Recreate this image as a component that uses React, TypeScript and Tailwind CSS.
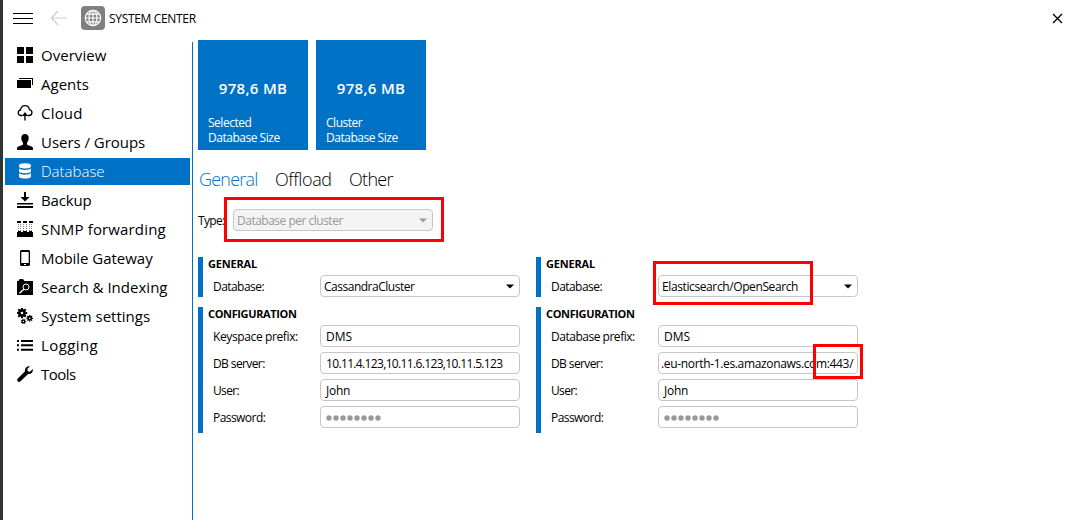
import type { ReactNode } from "react";

function Svg({ children, box = "0 0 16 16" }: { children: ReactNode; box?: string }) {
  return (
    <svg className="-mt-px h-4 w-4 shrink-0" viewBox={box} fill="currentColor">
      {children}
    </svg>
  );
}

const gear = (cx: number, cy: number, r: number, n: number) => (
  <g key={`${cx}-${cy}`} fill="none" stroke="currentColor">
    <circle cx={cx} cy={cy} r={r * 0.55} strokeWidth={r * 0.56} />
    {Array.from({ length: n }, (_, i) => {
      const a = (i * 2 * Math.PI) / n;
      return (
        <line
          key={i}
          x1={cx + Math.cos(a) * r * 0.7}
          y1={cy + Math.sin(a) * r * 0.7}
          x2={cx + Math.cos(a) * r * 1.12}
          y2={cy + Math.sin(a) * r * 1.12}
          strokeWidth={r * 0.42}
        />
      );
    })}
  </g>
);

const icons: Record<string, ReactNode> = {
  overview: <Svg><path d="M0 0h7v7H0zM9 0h7v7H9zM0 9h7v7H0zM9 9h7v7H9z" /></Svg>,
  agents: <Svg><path d="M0 4h14v8H0zM2 2h14v7h-1V3H2z" /></Svg>,
  cloud: (
    <Svg>
      <path d="M5.500 10.500H3.600A2.800 2.800 0 0 1 3.400 5C4 2.300 5.700 .7 8 .7s4 1.500 4.500 3.900a3 3 0 0 1 0 5.900H10.500" fill="none" stroke="currentColor" strokeWidth="1.300" />
      <path d="M8 7l3 4H8.700v4.500H7.300V11H5z" />
    </Svg>
  ),
  users: <Svg><path d="M8 0c2.600 0 3.800 1.700 3.700 4.200-.1 2-.8 3.400-1.700 4.500v1.700c.5 1 5 1.300 6 3.300V16H0v-2.300c1-2 5.500-2.300 6-3.300V8.700C5 7.600 4.400 6.200 4.300 4.200 4.200 1.700 5.400 0 8 0z" /></Svg>,
  database: (
    <Svg>
      <path d="M2 2.500C2-.4 14-.4 14 2.500v1C14 6.100 2 6.100 2 3.500zM2 5.300c1.500 2.100 10.500 2.100 12 0v3c0 2.600-12 2.600-12 0zM2 10.100c1.500 2.100 10.500 2.100 12 0v3.300c0 2.900-12 2.900-12 0z" />
    </Svg>
  ),
  backup: <Svg><path d="M7 0h2v5h3.500L8 9.500 3.500 5H7zM0 11h16v1.500H0zM0 14h16v2H0z" /></Svg>,
  snmp: (
    <Svg>
      <path d="M0 0h4v2H0zM6 0h4v2H6zM12 0h4v2h-4zM0 11h1v-1h3v1h2v-1h4v1h2v-1h3v1h1v5H0z" />
      <path d="M1.500 3v7M3.500 3v7M6.500 3v7M9.500 3v7M12.500 3v7M14.500 3v7" stroke="currentColor" strokeWidth=".6" strokeDasharray="1 1" opacity=".75" />
    </Svg>
  ),
  mobile: (
    <Svg>
      <path fillRule="evenodd" d="M4.500 0h7A1.500 1.500 0 0 1 13 1.500v13a1.500 1.500 0 0 1-1.500 1.500h-7A1.500 1.500 0 0 1 3 14.500v-13A1.500 1.500 0 0 1 4.500 0zM4.300 2v11h7.400V2zM7 14v1h2v-1z" />
    </Svg>
  ),
  search: (
    <Svg>
      <path d="M0 16V2h1.500l1-2h3.500l1.500 2H16v14z" />
      <circle cx="9" cy="8" r="3" fill="none" stroke="white" strokeWidth="1" />
      <path d="M6.800 10.200l-4.300 4" stroke="white" strokeWidth="1.400" />
    </Svg>
  ),
  settings: <Svg>{[gear(5, 5, 4.700, 8), gear(12.700, 10.300, 3, 8), gear(6.500, 13.500, 2.400, 7)]}</Svg>,
  logging: <Svg><path d="M0 3h2v2H0zM4 3h12v2H4zM0 7.300h2v2H0zM4 7.300h12v2H4zM0 11.700h2v2H0zM4 11.700h12v2H4z" /></Svg>,
  tools: (
    <Svg>
      <path d="M13 .3 10.300 3l.4 2.300 2.300.4 2.700-2.700c.8 3-1.400 5.400-4.600 5L3.300 15.500c-1.600 1.300-4-.9-2.700-2.700L8 5.300C7.500 2 10 -.5 13 .3z" />
    </Svg>
  ),
};

const nav = [
  { icon: "overview", label: "Overview", track: "tracking-[0.04px]" },
  { icon: "agents", label: "Agents", track: "tracking-[0.02px]" },
  { icon: "cloud", label: "Cloud", track: "tracking-[0.2px]" },
  { icon: "users", label: "Users / Groups", track: "tracking-[-0.03px]" },
  { icon: "database", label: "Database", track: "font-light tracking-[0px]" },
  { icon: "backup", label: "Backup", track: "tracking-[-0.15px]" },
  { icon: "snmp", label: "SNMP forwarding", track: "tracking-[0.15px]" },
  { icon: "mobile", label: "Mobile Gateway", track: "tracking-[-0.03px]" },
  { icon: "search", label: "Search & Indexing", track: "tracking-[0.02px]" },
  { icon: "settings", label: "System settings", track: "tracking-[0.01px]" },
  { icon: "logging", label: "Logging", track: "tracking-[0.4px]" },
  { icon: "tools", label: "Tools", track: "tracking-[-0.5px]" },
];

function Caret() {
  return (
    <svg className="h-[5px] w-2 shrink-0" viewBox="0 0 8 5" fill="currentColor">
      <path d="M0 .5h8L4 4.500z" />
    </svg>
  );
}

function Tile({ title }: { title: string }) {
  return (
    <div className="flex h-[110px] w-[110px] flex-col bg-[#0072c6] text-white">
      <div className="mt-[38px] text-center text-[15px] leading-5 font-semibold tracking-[0.3px]">978,6 MB</div>
      <div className="mt-[17px] pl-[10px] text-[12px] leading-[15px] tracking-[-0.48px]">
        {title}
        <br />
        Database Size
      </div>
    </div>
  );
}

function Field({ label, children, track = "tracking-[-0.55px]" }: { label: string; children: ReactNode; track?: string }) {
  return (
    <div className="flex h-[22px] items-center">
      <span className={`w-[107px] shrink-0 pt-[2px] text-[12px] ${track}`}>{label}</span>
      <div className="flex h-[22px] w-[200px] items-center overflow-hidden rounded-[4px] border border-[#c6c6c6] bg-white text-[12px] whitespace-nowrap">
        {children}
      </div>
    </div>
  );
}

function Password() {
  return (
    <svg className="mt-[2px] ml-[5px] h-[6px] w-[56px]" viewBox="0 0 56 6" fill="#999">
      {Array.from({ length: 8 }, (_, i) => (
        <circle key={i} cx={3 + i * 7} cy="3" r="2.700" />
      ))}
    </svg>
  );
}

type ColumnProps = { database: ReactNode; prefix: string; prefixTrack: string; server: ReactNode };

function Column({ database, prefix, prefixTrack, server }: ColumnProps) {
  return (
    <div className="flex w-[338px] flex-col gap-[10px]">
      <section className="h-10 border-l-[5px] border-[#0072c6]">
        <h2 className="h-[18px] pl-[5px] text-[11px] leading-[14px] font-bold tracking-[-0.18px]">GENERAL</h2>
        <div className="pl-[10px]">
          <Field label="Database:">
            {database}
            <span className="flex pr-[5px]"><Caret /></span>
          </Field>
        </div>
      </section>
      <section className="h-[126px] border-l-[5px] border-[#0072c6]">
        <h2 className="h-[18px] pl-[5px] text-[11px] leading-[14px] font-bold tracking-[-0.36px]">CONFIGURATION</h2>
        <div className="flex flex-col gap-[5px] pl-[10px]">
          <Field label={prefix} track={prefixTrack}><span className="pt-px pl-[5px]">DMS</span></Field>
          <Field label="DB server:" track="tracking-[-0.6px]">{server}</Field>
          <Field label="User:" track="tracking-[-0.65px]"><span className="pt-px pl-[5px] tracking-[-0.25px]">John</span></Field>
          <Field label="Password:"><Password /></Field>
        </div>
      </section>
    </div>
  );
}

export default function App() {
  return (
    <div className="relative flex h-[520px] w-[1073px] flex-col overflow-hidden border-l-[3px] border-[#333] bg-white font-['Open_Sans','Noto_Sans',sans-serif] text-black">
      <header className="flex h-10 shrink-0 items-start pl-[10px]">
        <svg className="mt-3 h-[13px] w-5" viewBox="0 0 20 13" fill="currentColor">
          <path d="M0 1h20v1H0zM0 6h20v1H0zM0 11h20v1H0z" />
        </svg>
        <svg className="mt-[10px] ml-[17px] h-4 w-[18px]" viewBox="0 0 18 16" fill="none" stroke="#ccc" strokeWidth="1.200">
          <path d="M17 8H2M8 1L1.500 8 8 15" />
        </svg>
        <div className="mt-[6px] ml-[13px] flex h-6 w-6 items-center justify-center rounded-[4px] bg-[#808080]">
          <svg className="h-[18px] w-[18px]" viewBox="0 0 18 18" fill="none" stroke="white" strokeWidth="1.200">
            <circle cx="9" cy="9" r="7.700" />
            <ellipse cx="9" cy="9" rx="4" ry="7.700" />
            <path d="M9 1v16M2.500 5.200h13M1 9h16M2.500 12.800h13" />
          </svg>
        </div>
        <span className="mt-[11px] ml-1 text-[12px] leading-4 tracking-[-0.33px]">SYSTEM CENTER</span>
        <svg className="mt-[13px] mr-[10px] ml-auto h-[11px] w-[11px]" viewBox="0 0 11 11" stroke="black" strokeWidth="1.400">
          <path d="M1 1l9 9M10 1l-9 9" />
        </svg>
      </header>
      <div className="flex min-h-0 flex-1">
        <nav className="mt-[2px] flex w-[190px] shrink-0 flex-col gap-[2px] border-r border-[#0072c6] pr-[2px] pl-[2px]">
          {nav.map((n) => (
            <div
              key={n.icon}
              className={`flex h-[27px] shrink-0 items-center gap-2 pl-3 text-[15px] whitespace-nowrap ${n.track} ${n.icon === "database" ? "bg-[#0072c6] text-white" : ""}`}
            >
              {icons[n.icon]}
              <span>{n.label}</span>
            </div>
          ))}
        </nav>
        <main className="flex flex-col pl-[5px]">
          <div className="flex gap-2">
            <Tile title="Selected" />
            <Tile title="Cluster" />
          </div>
          <div className="mt-[17px] flex h-6 items-center pl-[1px] text-[18px] leading-6 font-light">
            <span className="w-[76px] tracking-[-0.8px] text-[#0072c6]">General</span>
            <span className="w-[74px] tracking-[-0.4px]">Offload</span>
            <span className="tracking-[-0.7px]">Other</span>
          </div>
          <div className="mt-[18px] flex h-[22px] items-center text-[12px]">
            <span className="w-[35px] pt-px tracking-[-0.66px]">Type:</span>
            <div className="flex h-[22px] w-[200px] items-center justify-between rounded-[4px] border border-[#c6c6c6] bg-[#f3f3f3] pr-[5px] pl-[3px] tracking-[-0.5px] text-[#999]">
              <span className="pt-[2px]">Database per cluster</span>
              <Caret />
            </div>
          </div>
          <div className="mt-[26px] flex">
            <Column
              database={<span className="flex-1 pt-px pl-[3px] tracking-[-0.49px]">CassandraCluster</span>}
              prefix="Keyspace prefix:"
              prefixTrack="tracking-[-0.38px]"
              server={<span className="pt-px pl-[5px] tracking-[-0.65px]">10.11.4.123,10.11.6.123,10.11.5.123</span>}
            />
            <Column
              database={<span className="flex-1 pt-px pl-[3px] tracking-[-0.39px]">Elasticsearch/OpenSearch</span>}
              prefix="Database prefix:"
              prefixTrack="tracking-[-0.48px]"
              server={<span className="pt-px pl-[2px] tracking-[-0.34px]">.eu-north-1.es.amazonaws.com:443/</span>}
            />
          </div>
        </main>
      </div>
      <div className="absolute top-[197px] left-[221px] h-[45px] w-[220px] border-3 border-[#f00]" />
      <div className="absolute top-[261px] left-[650px] h-[44px] w-[160px] border-3 border-[#f00]" />
      <div className="absolute top-[344px] left-[810px] h-[35px] w-[50px] border-3 border-[#f00]" />
    </div>
  );
}
